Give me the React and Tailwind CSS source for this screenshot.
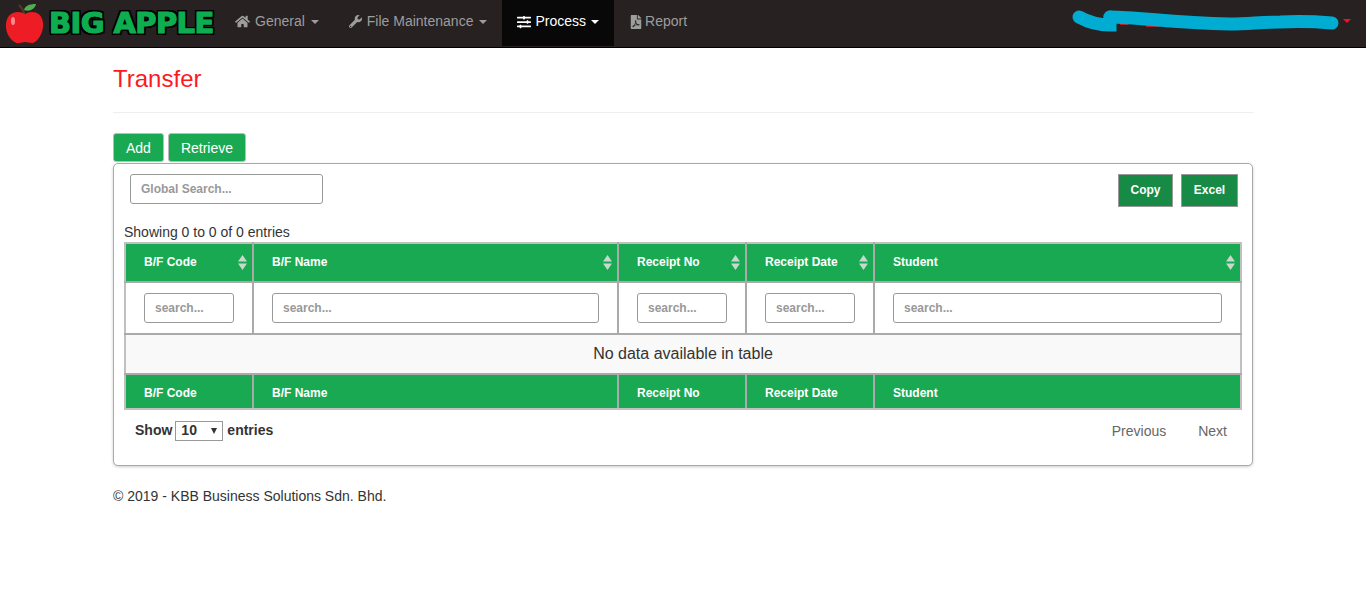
import React from "react";
import { FaHome, FaWrench, FaSlidersH, FaFilePdf } from "react-icons/fa";

const columns = [
  { name: "B/F Code", width: "w-[128px]", input: "w-[90px]" },
  { name: "B/F Name", width: "w-[365px]", input: "w-[327px]" },
  { name: "Receipt No", width: "w-[128px]", input: "w-[90px]" },
  { name: "Receipt Date", width: "w-[128px]", input: "w-[90px]" },
  { name: "Student", width: "w-[367px]", input: "w-[329px]" },
];

const Caret = ({ className }) => (
  <span className={`inline-block h-0 w-0 border-x-[4px] border-t-[4px] border-x-transparent align-middle ${className}`} />
);

const NavItem = ({ icon, label, caret, active }) => (
  <a
    className={`flex h-[46px] items-center px-[15px] pb-[3px] text-[14px] ${active ? "bg-[#080808] text-white" : "text-[#9d9d9d]"}`}
  >
    {icon}
    <span>{label}</span>
    {caret && <Caret className={active ? "ml-[5px] border-t-white" : "ml-[6px] border-t-[#9d9d9d]"} />}
  </a>
);

const Logo = () => (
  <div className="flex w-[220px] items-center pl-[5px]">
    <svg width="40" height="42" viewBox="0 0 40 42" className="shrink-0">
      <path d="M19 11 C19 8 17 5 14 2" stroke="#5b3a1c" strokeWidth="2" fill="none" />
      <path d="M19 7 C20 3 24 1 31 1 C30 6 25 9 19 7Z" fill="#4caf50" />
      <path
        d="M20 11 C14 7 2 8 1 21 C0 31 8 41 14 40 C17 40 18 39 20 39 C22 39 24 40 27 40 C32 40 39 30 38 20 C37 8 26 7 20 11Z"
        fill="#ee1c25"
      />
      <ellipse cx="8" cy="18" rx="2" ry="4" fill="#f98a8f" />
    </svg>
    <span className="ml-[4px] font-['DejaVu_Sans',sans-serif] text-[29px] leading-none font-bold tracking-[-0.6px] whitespace-nowrap text-[#0eae50] [-webkit-text-stroke:1.2px_#0eae50] [text-shadow:2px_0_0_#000,-2px_0_0_#000,0_2px_0_#000,0_-2px_0_#000,2px_2px_0_#000,-2px_2px_0_#000,2px_-2px_0_#000,-2px_-2px_0_#000]">
      BIG APPLE
    </span>
  </div>
);

const SortIcon = () => (
  <svg width="9" height="15" viewBox="0 0 9 15" className="absolute top-[11px] right-[5px]">
    <path d="M4.5 0 L9 6.5 H0Z" fill="#c8d8cd" />
    <path d="M4.5 15 L9 8.5 H0Z" fill="#c8d8cd" />
  </svg>
);

// the username is painted over in the screenshot
const Scribble = () => (
  <svg width="272" height="26" viewBox="0 0 272 26" className="absolute top-[8px] right-[24px]">
    <path d="M50 16 H58 M76 18 H90" stroke="#f01c24" strokeWidth="1.5" fill="none" />
    <path
      d="M40 9 C70 9 100 15 160 16 C180 16 190 14 210 14 C230 13 250 14 262 15"
      stroke="#00acd1"
      strokeWidth="13"
      strokeLinecap="round"
      fill="none"
    />
    <path d="M9 9 C18 14 30 17 40 17 L40 9" stroke="#00acd1" strokeWidth="13" strokeLinecap="round" fill="none" />
  </svg>
);

const searchInput = "h-[30px] rounded-[3px] border border-[#999] bg-white px-[10px] text-[12px] font-bold placeholder:text-[#999]";
const edgeBorders = "border-2 border-[#aaa] first:border-l-[#c0c0c0] last:border-r-[#c0c0c0]";

export default function App() {
  return (
    <div className="min-h-[599px] bg-white font-['Liberation_Sans',Arial,sans-serif] text-[14px] text-[#333]">
      {/* top navbar */}
      <nav className="relative flex h-[48px] border-b border-black bg-[#272121]">
        <Logo />
        <NavItem icon={<FaHome className="mr-[5px] text-[15px]" />} label="General" caret />
        <NavItem icon={<FaWrench className="mr-[5px] text-[13px]" />} label="File Maintenance" caret />
        <NavItem icon={<FaSlidersH className="mr-[4px] text-[14px]" />} label="Process" caret active />
        <NavItem icon={<FaFilePdf className="mr-[2px] text-[14px]" />} label="Report" />
        <Scribble />
        <Caret className="absolute top-[19px] right-[15px] border-t-[#f5101a]" />
      </nav>

      <div className="mx-auto w-[1140px]">
        <h1 className="mt-[18px] text-[24px] leading-[26px] font-normal text-[#fb1a22]">Transfer</h1>
        <hr className="mt-[20px] border-[#eee]" />

        <div className="mt-[20px] flex gap-[4px]">
          <button className="h-[29px] rounded-[3px] border border-[#bbb] bg-[#19a952] px-[12px] pt-px text-[14px] text-white">Add</button>
          <button className="h-[29px] rounded-[3px] border border-[#bbb] bg-[#19a952] px-[12px] pt-px text-[14px] text-white">Retrieve</button>
        </div>

        {/* table card */}
        <div className="mt-[1px] h-[303px] rounded-[5px] border border-[#aaa] bg-white shadow-[0_1px_3px_rgba(0,0,0,0.2)]">
          <div className="flex justify-between pt-[10px] pr-[14px] pl-[16px]">
            <input className={`${searchInput} w-[193px]`} placeholder="Global Search..." />
            <div className="flex gap-[8px]">
              <button className="h-[33px] w-[55px] border border-[#999] bg-[#178a46] pb-[2px] text-[12px] font-bold text-white">Copy</button>
              <button className="h-[33px] w-[57px] border border-[#999] bg-[#178a46] pb-[2px] text-[12px] font-bold text-white">Excel</button>
            </div>
          </div>

          <div className="mt-[15px] pl-[10px] leading-[20px]">Showing 0 to 0 of 0 entries</div>

          <table className="ml-[10px] w-[1116px] table-fixed border-collapse border-2 border-[#c0c0c0]">
            <colgroup>
              {columns.map((c) => (
                <col key={c.name} className={c.width} />
              ))}
            </colgroup>
            <thead>
              <tr className="h-[39px] bg-[#19a952] text-[12px] font-bold text-white">
                {columns.map((c) => (
                  <th key={c.name} className={`relative ${edgeBorders} border-t-[#c0c0c0] pb-[2px] pl-[18px] text-left`}>
                    {c.name}
                    <SortIcon />
                  </th>
                ))}
              </tr>
              <tr className="h-[52px]">
                {columns.map((c) => (
                  <th key={c.name} className={`${edgeBorders} pl-[18px] text-left`}>
                    <input className={`${searchInput} ${c.input} block`} placeholder="search..." />
                  </th>
                ))}
              </tr>
            </thead>
            <tbody>
              <tr className="h-[40px] bg-[#f9f9f9]">
                <td colSpan={5} className="border-2 border-[#aaa] border-x-[#c0c0c0] text-center text-[16px]">
                  No data available in table
                </td>
              </tr>
            </tbody>
            <tfoot>
              <tr className="h-[35px] bg-[#19a952] text-[12px] font-bold text-white">
                {columns.map((c) => (
                  <th key={c.name} className={`${edgeBorders} border-b-[#c0c0c0] pt-[2px] pl-[18px] text-left`}>
                    {c.name}
                  </th>
                ))}
              </tr>
            </tfoot>
          </table>

          <div className="mt-[9px] flex items-center justify-between pr-[25px] pl-[21px]">
            <div className="flex items-center font-bold">
              <span>Show</span>
              <div className="mr-[4px] ml-[3px] flex h-[20px] w-[48px] items-center justify-between border border-[#999] pr-[5px] pl-[5px]">
                <span>10</span>
                <span className="h-0 w-0 border-x-[3px] border-t-[6px] border-x-transparent border-t-[#333]" />
              </div>
              <span>entries</span>
            </div>
            <div className="flex gap-[32px] pt-[2px] text-[#666]">
              <span>Previous</span>
              <span>Next</span>
            </div>
          </div>
        </div>

        <footer className="mt-[20px] leading-[20px]">© 2019 - KBB Business Solutions Sdn. Bhd.</footer>
      </div>
    </div>
  );
}
